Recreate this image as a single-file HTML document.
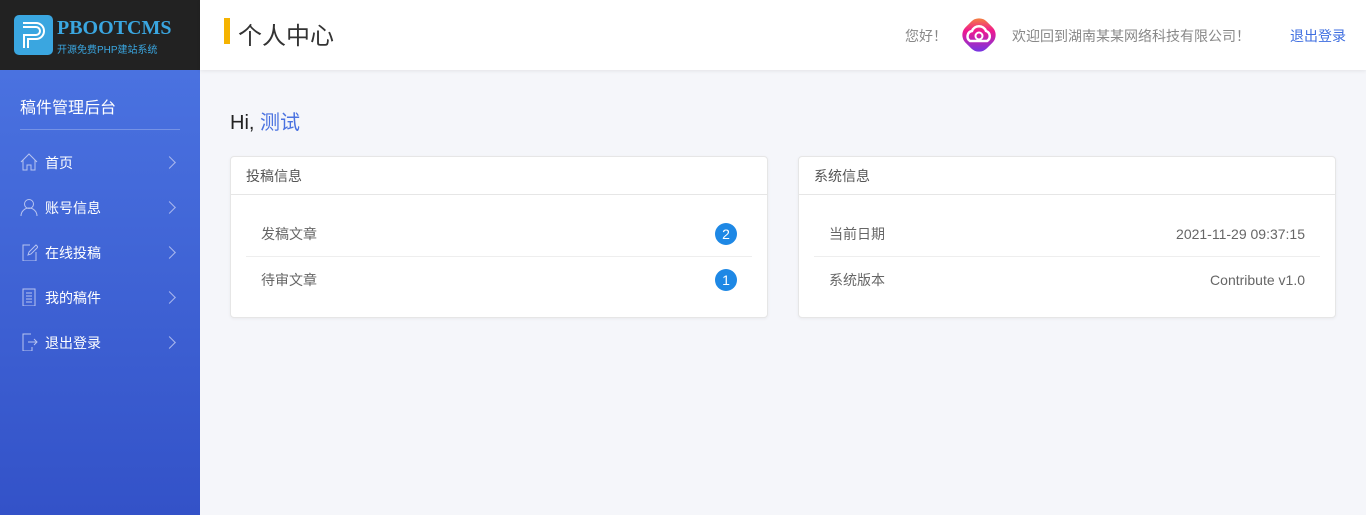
<!DOCTYPE html>
<html><head><meta charset="utf-8"><style>
*{margin:0;padding:0;box-sizing:border-box}
body{width:1366px;height:515px;overflow:hidden;background:#f5f6fa;font-family:"Liberation Sans","Noto Sans CJK SC",sans-serif;position:relative}
.logo{position:absolute;left:0;top:0;width:200px;height:70px;background:#222}
.side{position:absolute;left:0;top:70px;width:200px;height:445px;background:linear-gradient(#4a72e0,#3352c8)}
.top{position:absolute;left:200px;top:0;right:0;height:70px;background:#fff;box-shadow:0 1px 4px rgba(0,0,0,.08)}
.nav{position:absolute;left:20px;width:160px;height:20px;color:#fff;font-size:14px}
.nav svg{position:absolute;left:0;top:0}
.nav span{position:absolute;left:25px;top:0;line-height:20px}
.nav i{position:absolute;right:6px;top:5px;width:9px;height:9px;border-right:1px solid #aab8ee;border-top:1px solid #aab8ee;transform:rotate(45deg)}
.card{position:absolute;top:156px;width:538px;height:162px;background:#fff;border:1px solid #e6e6e6;border-radius:4px;box-shadow:0 1px 3px rgba(0,0,0,.05)}
.card .h{height:38px;border-bottom:1px solid #e6e6e6;padding-left:15px;line-height:38px;font-size:14px;color:#555}
.row{position:absolute;left:15px;right:15px;height:46px;line-height:46px;padding:0 15px;font-size:14px;color:#666}
.row b{position:absolute;right:15px;font-weight:normal}
.badge{position:absolute;right:15px;top:12px;width:22px;height:22px;border-radius:50%;background:#1e88e5;color:#fff;text-align:center;line-height:22px;font-size:14px}
</style></head><body>
<div class="logo">
<svg style="position:absolute;left:14px;top:15px" width="39" height="40" viewBox="0 0 39 40"><rect width="39" height="40" rx="5" fill="#3aa6e0"/><path d="M9 8h13a8 8 0 0 1 0 16h-8v9M9 12h13a4 4 0 0 1 0 8h-12v13" fill="none" stroke="#fff" stroke-width="2"/></svg>
<div style="position:absolute;left:57px;top:17px;color:#3aa6e0;font:bold 20px 'Liberation Serif',serif">PBOOTCMS</div>
<div style="position:absolute;left:57px;top:41px;color:#3aa6e0;font-size:10px">开源免费PHP建站系统</div>
</div>
<div class="side">
<div style="position:absolute;left:20px;top:24px;color:#fff;font-size:16px">稿件管理后台</div>
<div style="position:absolute;left:20px;top:59px;width:160px;height:1px;background:rgba(255,255,255,.25)"></div>
<div class="nav" style="top:83px"><svg width="18" height="18" viewBox="0 0 18 18" fill="none" stroke="#b8c4f0"><path d="M1 9L9 1l8 8M3 7v10h4v-5h4v5h4V7"/></svg><span>首页</span><i></i></div>
<div class="nav" style="top:128px"><svg width="18" height="18" viewBox="0 0 18 18" fill="none" stroke="#b8c4f0"><circle cx="9" cy="6" r="4.5"/><path d="M1 18a8 8 0 0 1 16 0"/></svg><span>账号信息</span><i></i></div>
<div class="nav" style="top:173px"><svg width="18" height="18" viewBox="0 0 18 18" fill="none" stroke="#b8c4f0"><path d="M10 2H3v16h13V9M8 12l1-3 7-7 2 2-7 7z"/></svg><span>在线投稿</span><i></i></div>
<div class="nav" style="top:218px"><svg width="18" height="18" viewBox="0 0 18 18" fill="none" stroke="#b8c4f0"><path d="M3 1h12v17H3zM6 5h6M6 8h6M6 11h6M6 14h6"/></svg><span>我的稿件</span><i></i></div>
<div class="nav" style="top:263px"><svg width="18" height="18" viewBox="0 0 18 18" fill="none" stroke="#b8c4f0"><path d="M11 1H3v17h9v-4M8 9h9M14 6l3 3-3 3"/></svg><span>退出登录</span><i></i></div>
</div>
<div class="top">
<div style="position:absolute;left:24px;top:18px;width:6px;height:26px;background:#f5b301"></div>
<div style="position:absolute;left:38px;top:16px;font-size:24px;color:#333">个人中心</div>
<div style="position:absolute;left:705px;top:26px;font-size:14px;color:#888">您好！</div>
<svg style="position:absolute;left:757px;top:13px" width="44" height="44" viewBox="0 0 44 44"><defs><linearGradient id="g" x1="0" y1="0" x2="1" y2="1"><stop offset="0" stop-color="#f5a623"/><stop offset=".4" stop-color="#f0188f"/><stop offset="1" stop-color="#5b3cf5"/></linearGradient></defs><rect x="7" y="7" width="30" height="30" rx="11" transform="rotate(45 22 22)" fill="url(#g)"/><path d="M13 28a5.5 5.5 0 0 1 2-10 7.5 7.5 0 0 1 14 0 5.5 5.5 0 0 1 1 10z" fill="none" stroke="#fff" stroke-width="2.5"/><circle cx="22" cy="23" r="3.5" fill="none" stroke="#fff" stroke-width="2"/></svg>
<div style="position:absolute;left:812px;top:26px;font-size:14px;color:#888">欢迎回到湖南某某网络科技有限公司！</div>
<div style="position:absolute;left:1090px;top:26px;font-size:14px;color:#3e6ee0">退出登录</div>
</div>
<div style="position:absolute;left:230px;top:106px;font-size:20px;color:#222">Hi, <span style="color:#4a72e0">测试</span></div>
<div class="card" style="left:230px"><div class="h">投稿信息</div>
<div class="row" style="top:54px;border-bottom:1px solid #eee">发稿文章<span class="badge">2</span></div>
<div class="row" style="top:100px">待审文章<span class="badge">1</span></div></div>
<div class="card" style="left:798px"><div class="h">系统信息</div>
<div class="row" style="top:54px;border-bottom:1px solid #eee">当前日期<b>2021-11-29 09:37:15</b></div>
<div class="row" style="top:100px">系统版本<b>Contribute v1.0</b></div></div>
</body></html>
